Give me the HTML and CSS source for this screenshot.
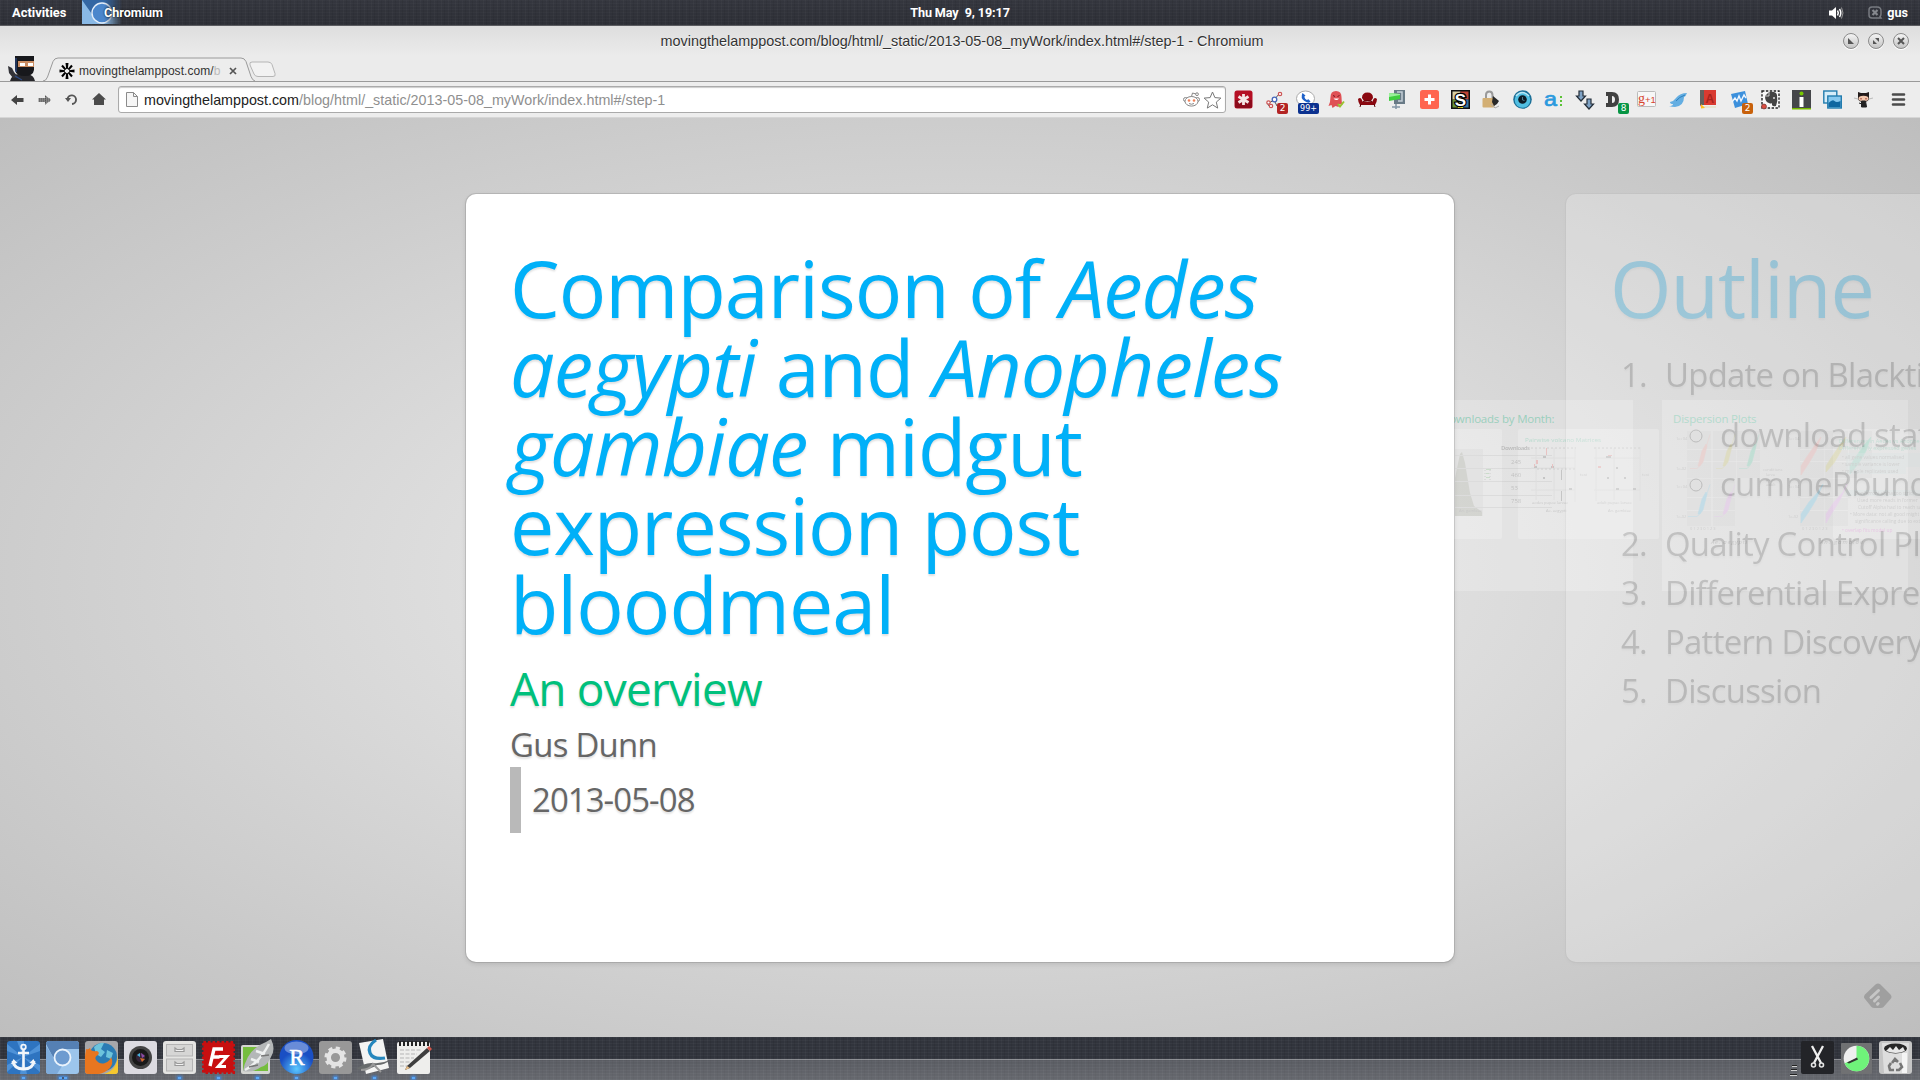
FILE: index.html
```
<!DOCTYPE html>
<html lang="en">
<head>
<meta charset="utf-8">
<title>movingthelamppost.com</title>
<link rel="stylesheet" href="styles.css">
</head>
<body>
<header class="panel fabric">
  <span class="activities">Activities</span>
  <div class="app-menu">
    <svg class="app-icon" width="40" height="24" viewBox="0 0 40 24"><defs><linearGradient id="fade" x1="0" x2="1"><stop offset=".55" stop-color="#fff"/><stop offset="1" stop-color="#000"/></linearGradient><mask id="fm"><rect width="40" height="24" fill="url(#fade)"/></mask></defs><g mask="url(#fm)"><rect width="40" height="24" fill="#89b9e6"/><path d="M0 0h40v9H18l-6 8z" fill="#3467a4"/><circle cx="20" cy="13" r="10" fill="#4a86cc" stroke="#e4eefa" stroke-width="1.4"/></g></svg>
    <span>Chromium</span>
  </div>
  <span class="clock">Thu May &nbsp;9, 19:17</span>
  <div class="status">
    <svg width="17" height="14" viewBox="0 0 17 14"><path d="M1 4.500h3L8 1v12L4 9.500H1z" fill="#fff"/><path d="M9.500 4.500q1.600 2.500 0 5M11.500 3q2.600 4 0 8" stroke="#fff" stroke-width="1.500" fill="none"/><path d="M13.500 1.500q3 5.500 0 11" stroke="#999" fill="none"/></svg>
    <svg class="chat" width="14" height="13" viewBox="0 0 14 13"><path d="M4 1h5q4 0 4 4v3q0 1.500-1 2.500l1 1.500H4q-3 0-3-3V4q0-3 3-3z" fill="none" stroke="#777a80" stroke-width="1.500"/><path d="M4.500 4l5 5m0-5l-5 5" stroke="#85888e" stroke-width="2.200"/></svg>
    <span>gus</span>
  </div>
</header>

<div class="titlebar">
  <span class="win-title">movingthelamppost.com/blog/html/_static/2013-05-08_myWork/index.html#/step-1 - Chromium</span>
  <div class="win-buttons">
    <i><svg width="8" height="8" viewBox="0 0 8 8"><path d="M1 1v6h6z" fill="#555"/></svg></i>
    <i><svg width="8" height="8" viewBox="0 0 8 8"><path d="M3 1h4v4zM1 3v4h4z" fill="#555"/></svg></i>
    <i><svg width="8" height="8" viewBox="0 0 8 8"><path d="M1 1l6 6M7 1L1 7" stroke="#555" stroke-width="2"/></svg></i>
  </div>
</div>

<div class="tabstrip">
  <svg class="ninja" width="29" height="25" viewBox="0 0 29 25"><path d="M3 25q2-7 9-7h8q7 1 8 7z" fill="#26262a"/><path d="M1 10l4 2 2 4 5 6-6 0-4-5z" fill="#333338"/><path d="M8 0h19v14q-1 6-9 6-9 0-10-6z" fill="#17181c"/><path d="M9 2v14M8 20l7 4" stroke="#2b4a86" stroke-width="1.200"/><path d="M11 5h16v6H11z" fill="#c98c62"/><path d="M13 7h5v3h-5zM21 7h5v3h-5z" fill="#fff"/></svg>
  <div class="tab">
    <svg class="tab-shape" width="212" height="25" viewBox="0 0 212 25"><path d="M0 24.500q3 0 4.500-4L10 5q1.500-3.500 5-3.500h183q3.500 0 5 3.500l5 15q1.500 4 4 4.500" fill="#ededed" stroke="#9a9a9a"/></svg>
    <svg class="fav" width="16" height="16" viewBox="0 0 16 16"><path d="M6.500 0h3L8.800 6H7.200zM6.500 16h3L8.800 10H7.200zM.5 6.500v3L6 8.800V7.200zM15.500 6.500v3L10 8.800V7.200z" fill="#000"/><path d="M3 2.500l3.600 4.100M9.400 9.400L13 13.500M13 2.500L9.400 6.600M6.600 9.400L3 13.500" stroke="#000" stroke-width="2.100"/></svg>
    <span class="tab-title">movingthelamppost.com/<em>b</em></span>
    <svg class="close" width="8" height="8" viewBox="0 0 8 8"><path d="M1 1l6 6M7 1L1 7" stroke="#555" stroke-width="1.700"/></svg>
  </div>
  <svg class="newtab" width="27" height="17" viewBox="0 0 27 17"><path d="M3 1h16q3 0 4 2.500l3 9q1 3-2 3H9q-3 0-4-2.500L1 4q-1-3 2-3z" fill="#f2f2f2" stroke="#b5b5b5"/></svg>
</div>

<div class="toolbar">
  <div class="nav">
    <svg width="13" height="12" viewBox="0 0 13 12"><path d="M0 6l6-5v3h6.500v4H6v3z" fill="#444"/></svg>
    <svg width="13" height="12" viewBox="0 0 13 12"><path d="M13 6L7 1v3H.5v4H7v3z" fill="#858585"/><path d="M1 5h11M1 7h11M7.500 2v8" stroke="#555" stroke-dasharray="1 1"/></svg>
    <svg width="13" height="13" viewBox="0 0 13 13"><path d="M2.500 6a4.300 4.300 0 1 1 4.500 5" fill="none" stroke="#555" stroke-width="1.900"/><path d="M0 5h6L3 9z" fill="#555"/></svg>
    <svg width="14" height="13" viewBox="0 0 14 13"><path d="M7 0l7 6.500h-2V12H2V6.500H0z" fill="#4b4b4b"/></svg>
  </div>
  <div class="omnibox">
    <svg width="12" height="15" viewBox="0 0 12 15"><path d="M.5.5h7l4 4v10H.5z" fill="#f6f6f6" stroke="#8b8b8b"/><path d="M7.500.5v4h4" fill="none" stroke="#8b8b8b"/></svg>
    <span class="url">movingthelamppost.com<em>/blog/html/_static/2013-05-08_myWork/index.html#/step-1</em></span>
    <svg width="17" height="15" viewBox="0 0 17 15"><g fill="#fff" stroke="#888"><circle cx="2.500" cy="7.500" r="2"/><circle cx="14.500" cy="7.500" r="2"/><ellipse cx="8.500" cy="9.300" rx="6.500" ry="4.800"/><path d="M8.500 4.500l1-3.500 3.500 1" fill="none"/><circle cx="14" cy="2.200" r="1.400"/></g><circle cx="6" cy="8.500" r="1.300" fill="#f0825a"/><circle cx="11" cy="8.500" r="1.300" fill="#f0825a"/><path d="M6 11.500q2.500 1.500 5 0" fill="none" stroke="#888"/></svg>
    <svg class="star" width="19" height="18" viewBox="0 0 19 18"><path d="M9.500 1l2.400 5.600 6 .5-4.600 4 1.400 6-5.200-3.300-5.200 3.300 1.400-6-4.600-4 6-.5z" fill="#fff" stroke="#777"/></svg>
  </div>
  <div class="extensions">
    <i><svg viewBox="0 0 19 19"><rect x=".5" y=".5" width="18" height="18" rx="2.500" fill="#b50f24"/><path d="M1 10h17v6q0 2-2 2H3q-2 0-2-2z" fill="#8c0a1b"/><path d="M9.500 4v11M4.500 6.500l10 6M14.500 6.500l-10 6" stroke="#f4e6e6" stroke-width="2.800"/></svg></i>
    <i><svg viewBox="0 0 19 19"><path d="M4 13l5-3 5-6M9 10l3 6M4 16l-1-2" stroke="#555" fill="none"/><g fill="#fff" stroke="#c55" stroke-width="1.200"><circle cx="15" cy="4" r="1.700"/><circle cx="3.500" cy="12.500" r="1.700"/><circle cx="6" cy="16" r="1.700"/></g><circle cx="9.500" cy="9.500" r="2.300" fill="#fff" stroke="#46b" stroke-width="1.300"/></svg><b class="badge red">2</b></i>
    <i><svg viewBox="0 0 19 19"><ellipse cx="9.500" cy="8.500" rx="9" ry="7.500" fill="#fff" stroke="#aaa"/><path d="M6.500 3q-2.500 5 2 8t6 .5l-2-2.300-1.700.8q-2-1-2.500-3.200L9.500 5.500z" fill="#1f62c9"/></svg><b class="badge blue">99+</b></i>
    <i><svg viewBox="0 0 19 19"><path d="M3.500 7q0-6 5.500-6t5.500 6q0 5 1 8l-3-1-1 3-3-1-3 2-1-3-3 1q2-4 2-9z" fill="#df5155"/><path d="M6 5.500l2 1M12.500 5.500l-2 1" stroke="#7a1620" fill="none"/><path d="M6.500 8.500q3 3 5.500 0z" fill="#fff"/><path d="M11 14l2 2.500 4-5" stroke="#98c331" stroke-width="2" fill="none"/></svg></i>
    <i><svg viewBox="0 0 19 19"><path d="M4 8q0-5.500 5.500-5.500T15 8l-2 3H6zM0 9q3-3 4.500 2.500h10Q16 6 19 9q0 3-2 6H2Q0 12 0 9z" fill="#8a0810"/><path d="M3 14l-1 3M16 14l1 3M5 11.500q4.500-2 9 0" stroke="#5d0309" fill="none"/></svg></i>
    <i><svg viewBox="0 0 19 19"><path d="M5 0h11v14H5z" fill="#697a86"/><path d="M8 2h5v9H9" fill="none" stroke="#c3ced6" stroke-width="1.500"/><path d="M0 3l11 1v5L0 11z" fill="#3fce3f"/><path d="M0 3l11 1v1L0 7z" fill="#9af09a"/><path d="M7 14v5M3 17h8" stroke="#8496a6" stroke-width="1.600"/></svg></i>
    <i><svg viewBox="0 0 19 19"><rect width="19" height="19" rx="2.500" fill="#ff6550"/><path d="M9.500 4.500v10M4.500 9.500h10" stroke="#fff" stroke-width="3"/></svg></i>
    <i><svg viewBox="0 0 19 19"><rect width="19" height="19" fill="#111"/><path d="M1.500 1.500h8v8h-8z" fill="#d8cfa5"/><path d="M9.500 1.500h8v8h-8z" fill="#c34434"/><path d="M1.500 9.500h8v8h-8z" fill="#69943b"/><path d="M9.500 9.500h8v8h-8z" fill="#3876a3"/><path d="M7 15h5v3H7z" fill="#ead820"/><text x="9.500" y="15.500" text-anchor="middle" font-family="Liberation Sans" font-weight="700" font-size="17" fill="#fff" stroke="#000" stroke-width="2.500" paint-order="stroke">S</text></svg></i>
    <i><svg viewBox="0 0 19 19"><path d="M4 9V5q0-3.500 3.200-3.500T10.500 5v4" stroke="#9a9a9a" stroke-width="2" fill="none"/><rect x=".5" y="8" width="12" height="9.500" rx="1" fill="#d3af74"/><path d="M11 6l6 5-2 3-3 2-2-4z" fill="#292929"/><path d="M9 14l4 4 4-2" stroke="#aaa" fill="none"/></svg></i>
    <i><svg viewBox="0 0 19 19"><circle cx="9.500" cy="9.500" r="9.300" fill="#1b6e96"/><circle cx="9.500" cy="10" r="7.800" fill="#51bfe2"/><circle cx="9.500" cy="9.500" r="4.300" fill="#0d1c26"/><path d="M9.500 7v3l2 .5" stroke="#5c96aa" stroke-width=".8" fill="none"/><path d="M3 6q6-7 13 0" stroke="#b9e6f5" stroke-width="1.500" fill="none"/></svg></i>
    <i><svg viewBox="0 0 19 19"><text x="0" y="15.500" font-family="Liberation Sans" font-size="21" fill="#2b9ade" stroke="#2b9ade" stroke-width=".7" textLength="13" lengthAdjust="spacingAndGlyphs">a</text><path d="M16 6h2v2h-2zM16 10h2v2h-2zM16 14h2v2h-2z" fill="#5bc236"/></svg></i>
    <i><svg viewBox="0 0 19 19"><path d="M4 1h4v5h2.500L6 11 1.500 6H4zM12 9h4v5h2.500L14 19l-4.500-5H12z" fill="#7fa3c6" stroke="#252f3a" stroke-width="1.200"/></svg></i>
    <i><svg viewBox="0 0 19 19"><path d="M0 2h6q7 0 7 7.500T6 17H0v-4h2V6H0zM6 6v7q3 0 3-3.500T6 6z" fill="#414141"/></svg><b class="badge green">8</b></i>
    <i><svg viewBox="0 0 19 19"><rect x=".5" y="1.500" width="18" height="15" rx="1" fill="#f7f7f7" stroke="#bbb"/><text x="1" y="13" font-family="Liberation Serif" font-size="14" fill="#d6452f">g</text><text x="8" y="12.500" font-family="Liberation Sans" font-size="9.500" fill="#d6452f">+1</text></svg></i>
    <i><svg viewBox="0 0 19 19"><path d="M1 16q4 0 4-2-3 0-3-2 4-1 6-4 4-5 11-5-1 3-3 4 0 9-9 10-3 0-6-1z" fill="#64aee2"/><path d="M8 11q3-4 9-6" stroke="#2e80bd" fill="none"/></svg></i>
    <i><svg viewBox="0 0 19 19"><path d="M1 0h16v15H3q-2 0-2 2z" fill="#d93a31"/><path d="M1 0h4v15H1z" fill="#64605e"/><path d="M3 16h14v2H3z" fill="#e8e3cf"/><path d="M2 14l4 4-4 .5z" fill="#ffc01e"/><text x="6.500" y="12.500" font-family="Liberation Sans" font-size="12" font-weight="700" fill="#a8221c">A</text></svg></i>
    <i><svg viewBox="0 0 19 19"><path d="M1 4l14-3 3 13-13 4z" fill="#3c90dc"/><path d="M2 12l3-4 2 3 2-5 2 5 3-6 2 3" stroke="#eef6ff" stroke-width="1.400" fill="none"/></svg><b class="badge orange">2</b></i>
    <i><svg viewBox="0 0 19 19"><rect x="1" y="1" width="17" height="17" fill="#fafafa" stroke="#222" stroke-width="1.400" stroke-dasharray="2.400 1.500"/><path d="M4 6l4-4q7-1 8 3 1 6-1 11-3 1-4-1v-2q-1 1-3 0-4-1-4-7z" fill="#444"/><path d="M4 6h4V2" stroke="#eee" stroke-width=".8" fill="none"/><circle cx="13" cy="8" r="1" fill="#ddd"/><circle cx="3" cy="16.500" r="2.400" fill="#de4c40" stroke="#8f4440"/></svg></i>
    <i><svg viewBox="0 0 19 19"><rect width="19" height="19" fill="#45464a"/><path d="M0 18h19v1.500H0z" fill="#77b900"/><circle cx="9.500" cy="3.500" r="2" fill="#77c800"/><path d="M7.500 7h4v10h-4z" fill="#fff"/></svg></i>
    <i><svg viewBox="0 0 19 19"><rect x=".8" y="1" width="13" height="12" fill="#d6edf9" stroke="#227cae" stroke-width="1.400"/><rect x="4.800" y="6" width="13.500" height="12" fill="#87c9ef" stroke="#227cae" stroke-width="1.400"/><path d="M5.500 17v-4q4-4 6-2t6 0v6z" fill="#0f67a0"/></svg></i>
    <i><svg viewBox="0 0 19 19"><path d="M4 2l3 1h5l3-1v7q-1 3-5.500 3T4 9z" fill="#231b1b"/><ellipse cx="9.500" cy="8.500" rx="5" ry="2.800" fill="#f3c7ac"/><path d="M7 8v1.500M12 8v1.500" stroke="#8a2a20"/><path d="M7.500 11h4l1 6h-5zM5 13l3 1" fill="#222" stroke="#222"/><path d="M0 8l4 1M19 8l-4 1" stroke="#bbb"/></svg></i>
  </div>
  <svg class="menu" width="13" height="13" viewBox="0 0 13 13"><path d="M1 1.500h11M1 6.500h11M1 11.500h11" stroke="#4b4b4b" stroke-width="2.600" stroke-linecap="round"/></svg>
</div>

<main class="stage">
  <section class="mini mini-a"><h3>Downloads by Month:</h3></section>
  <section class="mini mini-b"><h3>Dispersion Plots</h3></section>
  <section class="mini small small-a"></section>
  <section class="mini small small-b"></section>
  <section class="mini small small-c"></section>
  <svg class="charts" width="470" height="200" viewBox="1450 395 470 200">
    <g opacity=".2">
      <path d="M1455 449h28v67h-28z" fill="#ccc"/><path d="M1455 478l5-24 2-2 3 11 5 30 4 13 8 6 0 4h-27z" fill="#7e8370"/>
      <g class="cap"><text x="1459" y="512">An. gambiae</text></g>
      <path d="M1486 469h5v1h-5zM1486 473h3v1h-3zM1486 477h4v1h-4z" fill="#5a5"/><path d="M1485 470v12M1490 470v12" stroke="#666" stroke-dasharray="1 2"/>
      <path d="M1455 455.500h97M1455 468.500h97M1455 481.500h97M1455 495.500h97M1455 507.500h97" stroke="#aaa"/>
      <g class="tbl"><text x="1501" y="450" font-weight="700" textLength="29">Downloads</text><text x="1511" y="464">245</text><text x="1511" y="477">460</text><text x="1511" y="490">53</text><text x="1511" y="503">758</text></g>
      <text x="1525" y="442" class="gt" textLength="76" lengthAdjust="spacingAndGlyphs">Pairwise volcano Matrices</text>
      <g stroke="#bbb" fill="none"><path d="M1536 448v52M1554 448v52M1575 447v55M1531 458h44M1531 468h44M1531 490h44M1596 447v54M1614 448v52M1640 447v54M1594 458h46M1594 490h46"/><path d="M1531 448h45M1594 448h46M1537 469h38" stroke-dasharray="2 2" stroke="#777"/></g>
      <g fill="#444"><path d="M1543 456h3v2h-3zM1534 466h3v2h-3zM1551 466h3v2h-3zM1543 477h2v2h-2zM1569 488h3v2h-3zM1561 470h1v10h-1zM1561 491h1v10h-1zM1606 456h5v2h-5zM1616 467h2v2h-2zM1607 477h2v2h-2zM1624 477h2v2h-2zM1616 488h3v2h-3zM1633 488h3v2h-3z"/></g>
      <g fill="#e33"><path d="M1546 448h1v7h-1zM1536 460h2v4h-2zM1534 464h1v3h-1zM1552 464h1v4h-1zM1608 455h4v1h-4zM1598 466h3v2h-3z"/></g>
      <g class="cap"><text x="1532" y="504">aedes  pupae  larvae</text><text x="1597" y="504">adult pupae larvae</text><text x="1546" y="512">Ae. aegypti</text><text x="1608" y="512">An. gambiae</text><text x="1580" y="476">test</text><text x="1642" y="476">test</text></g>
      <g fill="#bbb"><path d="M1687 431h24v47h-24zM1713 431h23v47h-23zM1737 431h23v47h-23zM1687 479h24v47h-24zM1713 479h22v47h-22zM1800 431h24v47h-24zM1825 431h23v47h-23zM1849 431h23v47h-23zM1800 479h24v47h-24zM1825 479h23v47h-23z" opacity=".8"/></g>
      <g stroke="#fff" opacity=".6"><path d="M1687 449.500h73M1687 461.500h73M1687 497.500h48M1687 510.500h48M1800 449.500h72M1800 461.500h72M1800 497.500h48M1800 510.500h48"/></g>
      <g stroke-width=".6">
        <g fill="#f76b63" stroke="#f76b63"><path d="M1690 468.500h7q3-2 4-5l9-29" fill="none"/><path d="M1698 466l4-15 4-7 1 2-4 16-3 4z"/><path d="M1801 475v-9l5-8 9-13 6-8-5 14-7 12z"/></g>
        <g fill="#b5a900" stroke="#b5a900"><path d="M1716 468.500h6q3-2 4-5l9-29" fill="none"/><path d="M1723 466l4-15 4-7 1 2-4 16-3 4z"/><path d="M1826 472v-6l5-8 9-13 6-8-5 14-7 12z"/></g>
        <g fill="#00bd7d" stroke="#00bd7d"><path d="M1739 468.500h8q3-2 4-5l8-29" fill="none"/><path d="M1747 466l4-15 4-7 1 2-4 16-3 4z"/><path d="M1850 474v-8l5-8 9-13 7-8-5 14-7 12z"/></g>
        <g fill="#00a9ec" stroke="#00a9ec"><path d="M1688 516.500h9q3-2 4-5l9-27" fill="none"/><path d="M1698 514l4-15 4-7 1 2-4 16-3 4z"/><path d="M1801 523v-9l8-12 9-10 5-8-7 16-8 13z"/></g>
        <g fill="#df6cf3" stroke="#df6cf3"><path d="M1714 516.500h8q3-2 4-5l9-27" fill="none"/><path d="M1723 514l4-15 4-7 1 2-4 16-3 4z"/><path d="M1826 523v-9l8-12 9-10 4-8-7 16-8 13z"/></g>
      </g>
      <g class="cap"><text x="1763" y="471">conditions</text><text x="1766" y="476">larva</text><text x="1766" y="481">pupa</text><text x="1766" y="486">adult</text><text x="1690" y="530">0 1 2 3   0 1 2 3</text><text x="1802" y="530">0 1 2 3   0 1 2 3</text><text x="1676" y="440">1e+04</text><text x="1676" y="470">1e-02</text><text x="1676" y="488">1e+04</text><text x="1676" y="518">1e-02</text><text x="1788" y="440">1e+04</text><text x="1788" y="488">1e+04</text><text x="1788" y="518">1e-02</text></g>
      <g class="tbl" font-style="italic"><text x="1711" y="544" textLength="36">Ae. aegypti</text><text x="1820" y="544" textLength="43">An. gambiae</text></g>
      <path d="M1846 453h74v14h-74zM1846 467h60v7h-60zM1846 490h74v6h-74z" fill="#9cc" opacity=".4"/>
      <g class="gt"><text x="1839" y="443">Differences in Aedes vs Anopheles</text><text x="1839" y="450">Differentially expressed genes</text></g>
      <g class="li"><text x="1842" y="459">•  all gene values normalised</text><text x="1842" y="466">•  sample variance is lower</text><text x="1842" y="473">•  multiple replicates used</text><text x="1855" y="495">Bonferroni alpha too strict</text><text x="1857" y="502">Used more reads in former</text><text x="1858" y="509">Cutoff Alpha had to reach same</text><text x="1850" y="516">• More data: not all good might</text><text x="1855" y="523">significance calling due to extra</text></g>
      <text class="li pink" x="1842" y="532">•  overlap fits model up</text>
    </g>
  </svg>

  <section class="slide outline">
    <h1>Outline</h1>
    <ol>
      <li>Update on Blacktie
        <ul><li>download stats</li><li>cummeRbund</li></ul>
      </li>
      <li>Quality Control Plots</li>
      <li>Differential Expression</li>
      <li>Pattern Discovery</li>
      <li>Discussion</li>
    </ol>
  </section>

  <section class="slide active">
    <h1>Comparison of <em>Aedes aegypti</em> and <em>Anopheles gambiae</em> midgut expression post bloodmeal</h1>
    <h3>An overview</h3>
    <p>Gus Dunn</p>
    <blockquote>2013-05-08</blockquote>
  </section>

  <svg class="feedly" width="28" height="26" viewBox="0 0 28 26"><path d="M11.500 1.500q2.500-2 5 0l10 10q2 2.500 0 4.500l-7 8q-1 1-3 1h-6q-2 0-3-1l-6.500-8q-2-2 0-4.500z" fill="#9f9f9f"/><path d="M7 14.500l7.500-7M10.500 18l4-4M13.500 21.200l.7-.7" stroke="#c6c6c6" stroke-width="3" stroke-linecap="round"/></svg>
</main>

<footer class="dock fabric">
  <div class="launchers">
    <i class="run"><svg viewBox="0 0 33 33"><rect width="33" height="33" rx="3" fill="#2e74c0"/><path d="M16 16L0 3v7zM16 16L10 0h7zM16 16L33 3v7zM16 16L0 24v7zM16 16l17 8v7zM16 16l-3 17h7z" fill="#4e92d8"/><g fill="none" stroke="#f2f6fa" stroke-width="2.600"><circle cx="16.500" cy="6" r="2.300" stroke-width="1.800"/><path d="M16.500 8v20M11 12h11"/><path d="M6 20q1 8 10.500 8T27 20" stroke-width="3"/></g><path d="M4 23l2.500-5 4 4zM29 23l-2.500-5-4 4z" fill="#f2f6fa"/></svg></i>
    <i class="run two"><svg viewBox="0 0 33 33"><rect width="33" height="33" rx="3" fill="#9cc5ec"/><path d="M0 3q0-3 3-3h27q3 0 3 3v5H16L8 18z" fill="#5580b4"/><path d="M0 5l10 15 6 5-5 8H3q-3 0-3-3z" fill="#7eabda"/><circle cx="16.500" cy="16.500" r="8" fill="#6d9bd0" stroke="#eaf3fc" stroke-width="1.800"/></svg></i>
    <i><svg viewBox="0 0 33 33"><rect width="33" height="33" rx="3" fill="#a7a7aa"/><circle cx="18" cy="16" r="14" fill="#2b7cb4"/><path d="M9 6q6-5 10-4l-3 6 4 3-4 5-5-3zM22 9l6 3-2 6-5-2z" fill="#6dc4dc"/><path d="M33 12q0 17-14 21h11q3 0 3-3z" fill="#f5c72e"/><path d="M1 8q2 1 4-1 1 4 7 3 3 1 1 4-4 2-2 5 4 5 9 3 5-2 6-6 3 6-1 11-5 5-11 6H3q-3 0-3-3V15z" fill="#e8761f"/></svg></i>
    <i><svg viewBox="0 0 33 33"><rect width="33" height="33" rx="3" fill="#dcdbe1"/><circle cx="16.500" cy="16.500" r="11.500" fill="#444"/><circle cx="16.500" cy="16.500" r="8.500" fill="#191919"/><circle cx="16.500" cy="16.500" r="4.500" fill="#35263a"/><path d="M13 14l3-2v4z" fill="#47b3dd"/><path d="M16 17l5 1-3 3z" fill="#d06a2a"/><path d="M17 12l4 3-3 2z" fill="#8f4da8"/></svg></i>
    <i class="run"><svg viewBox="0 0 33 33"><rect width="33" height="33" rx="3" fill="#e4e4e2"/><g fill="#d6d6d5" stroke="#b4b4b4"><rect x="3.500" y="3.500" width="26" height="11.500"/><rect x="3.500" y="18" width="26" height="12"/></g><g fill="#f1f1f1" stroke="#999" stroke-width="1.200"><path d="M12 7v3.500h9V7l-2 1.500h-5zM12 21v3.500h9V21l-2 1.500h-5z"/></g></svg></i>
    <i class="run"><svg viewBox="0 0 33 33"><rect x="1.500" y="1.500" width="30" height="30" fill="#c80f10" stroke="#c80f10" stroke-width="3" stroke-dasharray="2.500 2"/><path d="M8 25L12 8h9M9.500 16h8" fill="none" stroke="#fff" stroke-width="3.400"/><path d="M17 15.500h8l-9 10h8" fill="none" stroke="#fff" stroke-width="2.800"/></svg></i>
    <i class="run"><svg viewBox="0 0 33 33"><rect y="4" width="29" height="29" rx="2" fill="#d4d5d2"/><path d="M2 6h25v24H2z" fill="#75bd3e"/><path d="M2 30Q6 8 25 1l5-3q5 10 0 18-4 9-10 10-8 6-18 4z" fill="#b4b7b8"/><path d="M4 29Q18 22 28 3M10 18l8 3M15 10l9 3" stroke="#eef0f0" stroke-width="2.500" fill="none"/><path d="M8 26l9-2M20 15l8-1" stroke="#777" stroke-width="1.600"/></svg></i>
    <i class="run"><svg viewBox="0 0 33 33"><defs><radialGradient id="rb" cy=".85"><stop stop-color="#5bc8ff"/><stop offset="1" stop-color="#1a4fc4"/></radialGradient></defs><circle cx="16.500" cy="16" r="17" fill="url(#rb)"/><ellipse cx="16.500" cy="7" rx="12" ry="6.500" fill="#fff" opacity=".35"/><text x="17" y="24" text-anchor="middle" font-family="Liberation Serif" font-size="23" fill="#fff" stroke="#fff" stroke-width=".5">R</text></svg></i>
    <i class="run"><svg viewBox="0 0 33 33"><rect width="33" height="33" rx="3" fill="#989898"/><circle cx="16.500" cy="16.500" r="9.300" fill="none" stroke="#e4e4e4" stroke-width="3.500" stroke-dasharray="4 3.300"/><circle cx="16.500" cy="16.500" r="6.800" fill="none" stroke="#e4e4e4" stroke-width="4.500"/></svg></i>
    <i class="run"><svg viewBox="0 0 33 33"><path d="M1 2l24-4 6 29-23 6z" fill="#f4f4f3"/><path d="M18-1Q9 5 12 12q3 7 15 5" fill="none" stroke="#2687bd" stroke-width="3.200"/><path d="M-2 28q9-7 17-6t17-3q-5 5-13 5-9 6-21 4z" fill="#686b6c"/><path d="M3 29q9 0 12-6l8 8" stroke="#999" stroke-width="2" fill="none"/></svg></i>
    <i class="run"><svg viewBox="0 0 33 33"><rect y="1" width="33" height="32" rx="2" fill="#eeeeec"/><path d="M3 0v5M7 0v5M11 0v5M15 0v5M19 0v5M23 0v5M27 0v5M31 0v5" stroke="#222" stroke-width="2"/><path d="M3 9h22M3 13h17M3 17h14M3 21h11M3 25h8" stroke="#b5b5b5" stroke-dasharray="4 1.500"/><path d="M10 25L30 7l3 3-20 17-5 2z" fill="#3e3e3e"/><path d="M30 7l2-2 3 3-2 2z" fill="#d4564a"/><path d="M10 25l3 2-5 2z" fill="#e8bd86"/></svg></i>
  </div>
  <div class="tray">
    <svg class="grip" width="7" height="12" viewBox="0 0 7 12"><path d="M2 1.500h5M1 5.500h6M0 10.500h7" stroke="#d0d0d0"/><path d="M2 .5h5M1 4.500h6M0 9.500h7" stroke="#222"/></svg>
    <i><svg viewBox="0 0 33 33"><rect width="33" height="33" rx="2" fill="#232428"/><path d="M11 5l9 17M22 5l-9 17" stroke="#eee" stroke-width="2.300"/><g fill="none" stroke="#e5e5e5" stroke-width="1.600"><circle cx="12.500" cy="24" r="2"/><circle cx="20.500" cy="24" r="2"/></g></svg></i>
    <i class="timer"><svg viewBox="0 0 31 31"><rect width="31" height="31" rx="1" fill="#707173"/><circle cx="15.500" cy="15.500" r="12.800" fill="#efefef"/><path d="M15.500 15.500V2.700a12.800 12.800 0 1 1-12 17.500z" fill="#6ff37a"/><path d="M16 14.500l-10 5 2 1 9-4z" fill="#333"/></svg></i>
    <i><svg viewBox="0 0 33 33"><rect width="33" height="33" rx="3" fill="#c5c5c5"/><path d="M3 2h27l-2 30H5z" fill="#dedede"/><path d="M23 12h5v20h-5z" fill="#f5f5f5"/><ellipse cx="16.500" cy="7.500" rx="11.500" ry="5" fill="#262626"/><path d="M7 10l4-4 3 3 3-4 3 4 4-3 2 4q-9 4-19 0z" fill="#e8e8e8"/><path d="M13 22l3-4 3 3M21 22l2 4-3 3h-3M15 29h-4l-1-4 2-3" stroke="#777" stroke-width="2.600" fill="none"/></svg></i>
  </div>
</footer>
</body>
</html>
```
FILE: styles.css
```
* { box-sizing: border-box; }
html, body { margin: 0; height: 100%; }
body {
  display: flex; flex-direction: column;
  width: 1920px; height: 1080px; overflow: hidden;
  font-family: "Liberation Sans", Arial, sans-serif;
  background: #ededed;
}
svg { display: block; flex: none; overflow: visible; }
i, em { font-style: normal; }

.fabric {
  background:
    repeating-linear-gradient(90deg, rgba(255,255,255,.025) 0 1px, transparent 1px 3px, rgba(0,0,0,.06) 3px 4px, transparent 4px 7px),
    repeating-linear-gradient(0deg, rgba(255,255,255,.02) 0 1px, transparent 1px 3px),
    linear-gradient(#34363e, #2d2f36);
}

/* desktop panel */
.panel {
  height: 26px; flex: none;
  display: grid; grid-template-columns: 1fr auto 1fr; align-items: center;
  border-bottom: 1px solid #5b5c60;
  color: #fff; font: bold 12.600px/25px Roboto, sans-serif;
}
.activities { grid-area: 1 / 1; padding-left: 12px; font-size: 12.900px; }
.app-menu { grid-area: 1 / 1; display: flex; padding-left: 82px; height: 25px; }
.app-menu span { margin-left: -18px; text-shadow: 0 0 2px #000; z-index: 1; }
.clock { grid-area: 1 / 2; letter-spacing: -.1px; }
.status { grid-area: 1 / 3; display: flex; align-items: center; justify-content: flex-end; padding-right: 12px; }
.status .chat { margin: 0 5px 0 23px; }

/* window frame */
.titlebar {
  height: 30px; flex: none;
  display: grid; grid-template-columns: 1fr auto 1fr; align-items: center;
  background: linear-gradient(#dedede, #ebebeb);
}
.win-title { grid-column: 2; margin-left: 4px; font-size: 14.400px; color: #333; text-shadow: 0 1px 0 #fff; }
.win-buttons { display: flex; gap: 9px; justify-content: flex-end; padding-right: 11px; }
.win-buttons i {
  width: 16px; height: 16px; border-radius: 50%; border: 1px solid #8b8b8b;
  background: linear-gradient(#f4f4f4, #c4c4c4); box-shadow: 0 1px 0 #fff;
  display: flex; align-items: center; justify-content: center;
}

.tabstrip { height: 26px; flex: none; display: flex; border-bottom: 1px solid #9a9a9a; background: #ebebeb; }
.ninja { margin-left: 7px; overflow: hidden; }
.tab { width: 212px; height: 26px; margin-left: 7px; display: grid; grid-template-columns: 16px 1fr 8px; align-items: center; padding: 3px 18px 0 16px; column-gap: 4px; }
.tab-shape { grid-area: 1 / 1; margin: -3px 0 0 -16px; height: 26px; }
.fav { grid-area: 1 / 1; }
.tab > svg, .tab > span { position: relative; }
.tab-title { grid-area: 1 / 2; font-size: 12px; letter-spacing: .06px; color: #333; white-space: nowrap; overflow: hidden; }
.tab-title em { color: #bbb; }
.newtab { margin: 5px 0 0 -6px; }

.toolbar { height: 36px; flex: none; display: flex; align-items: center; padding: 0 15px 0 11px; background: #ededed; border-bottom: 1px solid #d6d6d6; }
.nav { display: flex; gap: 14px; align-items: center; width: 107px; }
.omnibox {
  width: 1108px; height: 27px; display: flex; align-items: center; padding: 0 3px 0 7px;
  background: #fff; border: 1px solid #aaa; border-radius: 3px; box-shadow: inset 0 1px 1px #ccc;
}
.url { flex: 1; margin-left: 6px; font-size: 14.300px; color: #222; white-space: nowrap; }
.url em { color: #8f8f8f; letter-spacing: .02px; }
.star { margin-left: 3px; }
.extensions { display: flex; gap: 12px; margin-left: 8px; }
.extensions i { width: 19px; height: 19px; position: relative; }
.extensions i > svg { width: 19px; height: 19px; }
.badge {
  position: absolute; right: -4px; bottom: -5px; height: 11px; min-width: 11px; padding: 0 2px; border-radius: 2px;
  font: 9px/11px "DejaVu Sans", sans-serif; color: #fff; text-align: center;
}
.red { background: #b32424; }
.blue { background: #0b318f; font-size: 8px; }
.green { background: #079544; }
.orange { background: #c8610b; }
.menu { margin-left: auto; }

/* presentation */
.stage {
  flex: 1; position: relative; overflow: hidden;
  display: flex; align-items: center; justify-content: center; padding-top: 1px;
  background: radial-gradient(#f0f0f0, #bebebe);
  font-family: "Open Sans", "Noto Sans", sans-serif; color: #666;
}
.slide {
  width: 988px; height: 768px; padding: 54px 44px 44px;
  background: #fff; border-radius: 10px;
  box-shadow: 0 0 0 1px rgba(0,0,0,.1), 0 2px 5px rgba(0,0,0,.12);
  font-size: 32.900px; line-height: 49px; letter-spacing: -.72px; text-shadow: 0 2px 2px rgba(0,0,0,.12);
}
.slide h1 { margin: 0; font-size: 79px; line-height: 79px; font-weight: 400; color: #00b0f8; letter-spacing: -.98px; }
.slide h1 em { font-style: italic; }
.slide h3 { margin: 14px 0 0; font-size: 46px; line-height: 63px; font-weight: 400; color: #00c07c; letter-spacing: -.8px; }
.slide p { margin: 0; }
.slide blockquote { margin: -2px 0 0; height: 66px; padding-left: 11px; border-left: 11px solid #b9b9b9; line-height: 65px; letter-spacing: -.9px; }
.active { z-index: 2; }
.outline { position: absolute; left: 1566px; top: 76px; opacity: .24; z-index: 1; }
.outline ol { margin: 23px 0 0; padding-left: 11px; white-space: nowrap; list-style: none; counter-reset: item; }
.outline ol > li { counter-increment: item; padding-left: 44px; }
.outline ol > li::before { content: counter(item) "."; display: inline-block; width: 44px; margin-left: -44px; }
.outline ul { margin: 11px 0; padding-left: 55px; list-style: circle; }

.mini { position: absolute; top: 282px; width: 246px; height: 191px; padding: 11px; background: rgba(255,255,255,.22); }
.mini-a { left: 1387px; padding-left: 54px; }
.mini-b { left: 1662px; }
.mini h3 { margin: 0; font: 400 11.500px/16px "Open Sans", sans-serif; color: #9bcfbd; white-space: nowrap; letter-spacing: -.2px; }
.small { top: 311px; width: 141px; height: 110px; border-radius: 2px; }
.small-a { left: 1361px; }
.small-b { left: 1518px; }
.small-c { left: 1833px; }
.charts { position: absolute; left: 1450px; top: 277px; }
.cap { font-size: 4px; fill: #444; }
.tbl { font-size: 6px; fill: #333; }
.gt { font-size: 5.500px; fill: #00a86c; }
.li { font-size: 4.800px; fill: #444; }
.pink { fill: #d0c; }
.feedly { position: absolute; left: 1864px; top: 865px; z-index: 3; }

/* dock */
.dock { height: 43px; flex: none; display: flex; justify-content: space-between; align-items: flex-start; padding: 4px 8px 0 7px; }
.dock.fabric {
  background:
    linear-gradient(transparent 22px, rgba(255,255,255,.45) 22px 23px, rgba(255,255,255,.2) 23px, rgba(255,255,255,.26)),
    repeating-linear-gradient(90deg, rgba(255,255,255,.03) 0 1px, transparent 1px 3px, rgba(0,0,0,.07) 3px 4px, transparent 4px 7px),
    repeating-linear-gradient(0deg, rgba(255,255,255,.03) 0 1px, transparent 1px 3px),
    #31343c;
}
.launchers { display: flex; gap: 6px; }
.dock i { width: 33px; height: 38px; display: flex; flex-direction: column; justify-content: space-between; align-items: center; }
.dock i > svg { width: 33px; height: 33px; }
.run::after { content: ""; width: 3px; height: 2px; background: #5da8f5; box-shadow: 0 0 3px 1px #3d8ff0; }
.two::after { width: 8px; background: linear-gradient(90deg, #5da8f5 3px, #44597a 3px 5px, #5da8f5 5px); }
.tray { display: flex; gap: 7px; }
.grip { margin: 24px -3px 0 0; }
.dock .timer { width: 31px; padding-top: 2px; justify-content: flex-start; }
.dock .timer svg { width: 31px; height: 31px; }
```
